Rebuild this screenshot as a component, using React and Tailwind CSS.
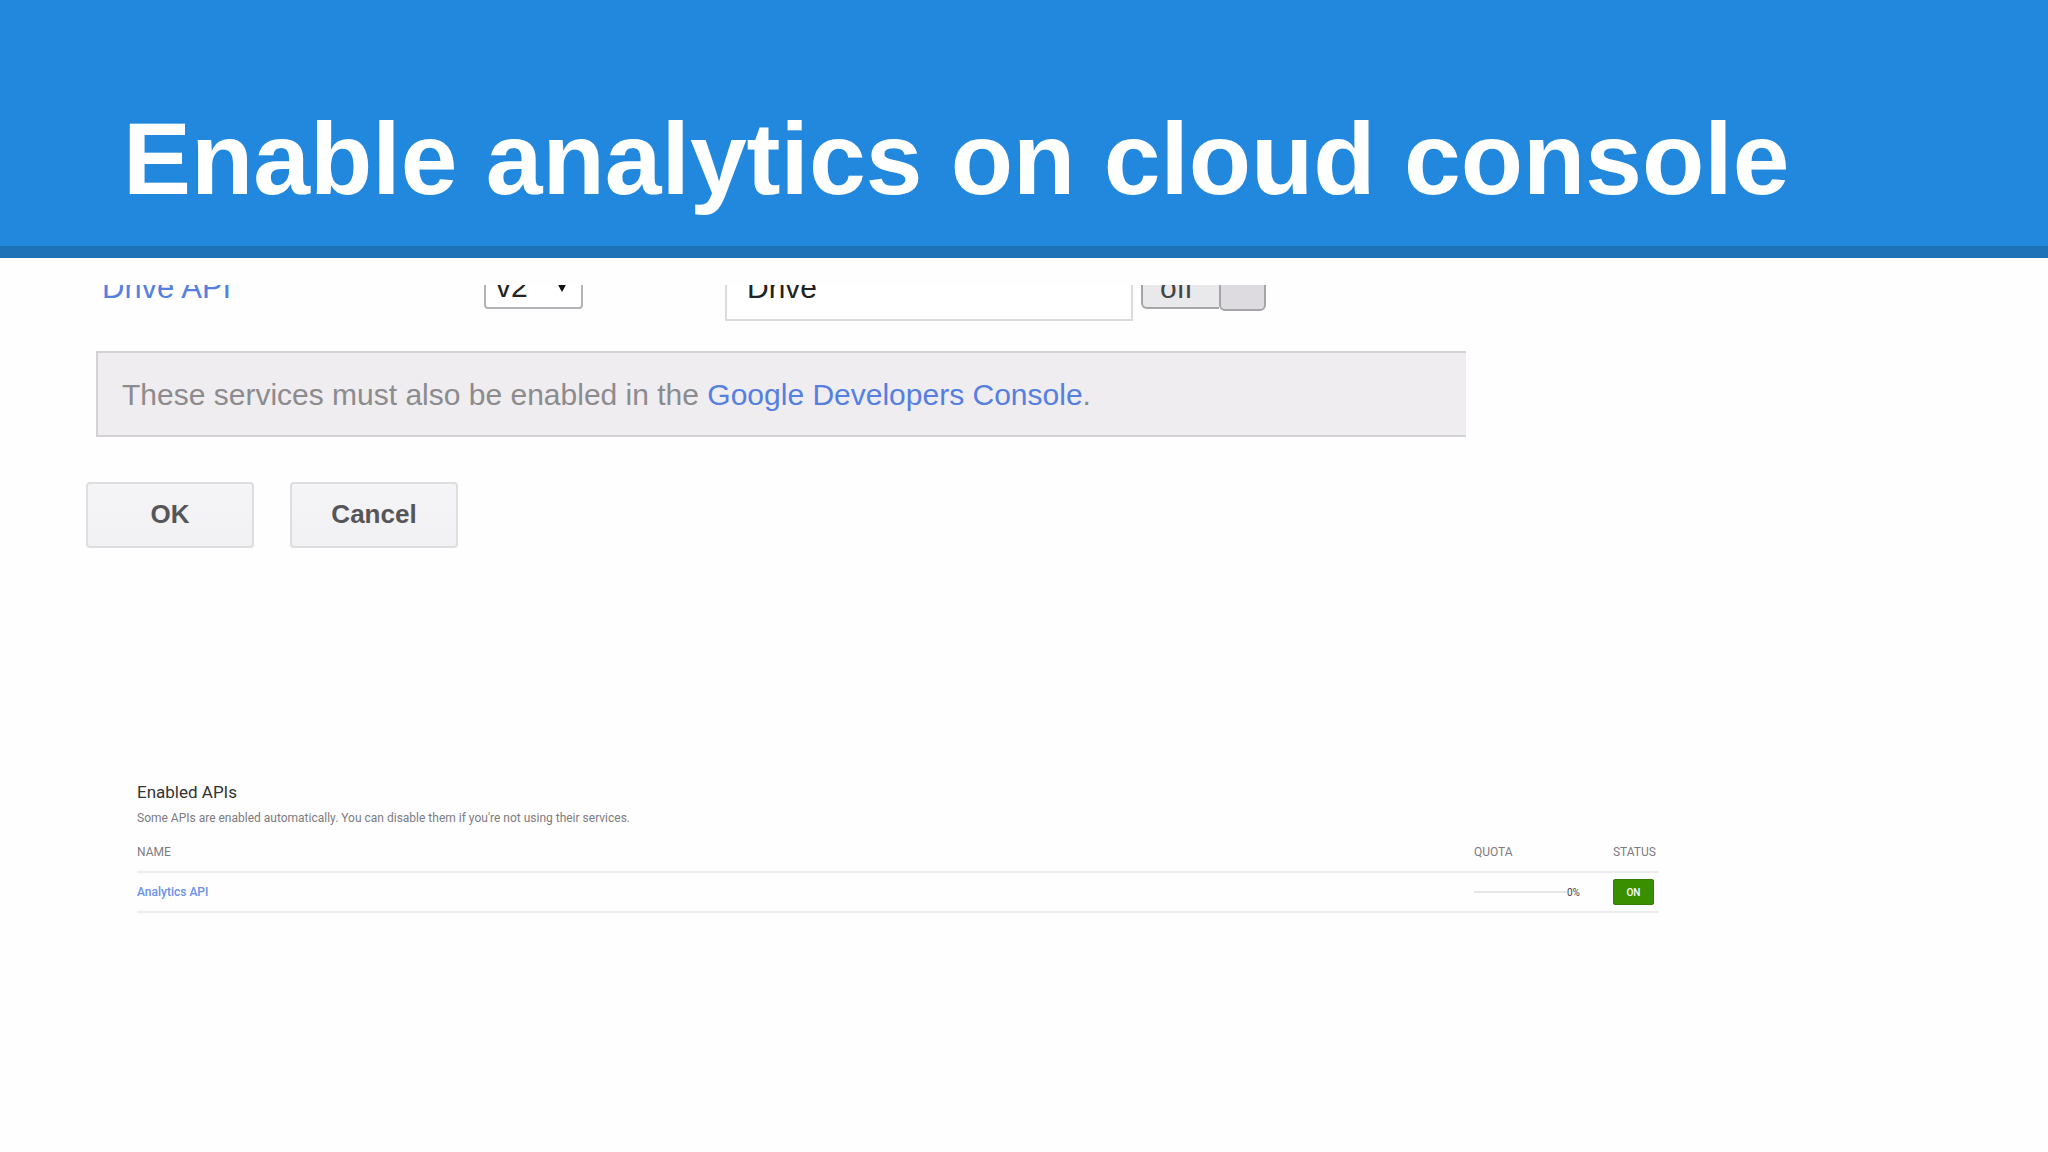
import React, { useState } from 'react';

const apis = [{ name: 'Analytics API', quota: 0 }];

const DriveRow = () => {
  const [version, setVersion] = useState('v2');
  const [identifier, setIdentifier] = useState('Drive');
  const [enabled, setEnabled] = useState(false);

  return (
    <div className="flex h-9 items-end overflow-hidden pl-[102px] text-[30px]">
      <div className="flex h-[66px] shrink-0 items-center">
        <a href="#drive" className="w-[382px] text-[31px] text-[#5580e0]">Drive API</a>
        <div className="relative mr-[142px]">
          <select
            aria-label="Version"
            value={version}
            onChange={(e) => setVersion(e.target.value)}
            className="block h-[42px] w-[99px] appearance-none rounded border-2 border-[#b4b3b8] bg-white pb-[2px] pl-[10px] leading-9 text-[#222]"
          >
            <option>v2</option>
            <option>v1</option>
          </select>
          <svg className="pointer-events-none absolute right-4 top-4 h-[9px] w-[10px]" viewBox="0 0 10 9">
            <path d="M0 0h10L5 9z" fill="#111" />
          </svg>
        </div>
        <input
          type="text"
          aria-label="Identifier"
          value={identifier}
          onChange={(e) => setIdentifier(e.target.value)}
          className="mr-2 h-[66px] w-[408px] border-2 border-[#dcdade] bg-white pl-5 text-[#222]"
        />
        <button
          type="button"
          role="switch"
          aria-checked={enabled}
          aria-label="Drive API"
          onClick={() => setEnabled(!enabled)}
          className="flex items-center text-[#444]"
        >
          <span className="flex h-[42px] w-[78px] items-center rounded-l-md border-2 border-r-0 border-[#a5a4a8] bg-[#e9e9eb] pb-[2px] pl-[17px]">
            {enabled ? 'on' : 'off'}
          </span>
          <span className="h-[46px] w-[47px] rounded-md border-2 border-[#a5a4a8] bg-[#dddbe0]" />
        </button>
      </div>
    </div>
  );
};

const DialogButton = ({ children }) => (
  <button
    type="button"
    className="h-[66px] w-[168px] rounded border-2 border-[#dedde0] bg-gradient-to-b from-[#f5f4f6] to-[#f1f0f2] pb-[2px] text-[26px] font-bold text-[#55555a]"
  >
    {children}
  </button>
);

const EnabledApis = () => (
  <section className="ml-[137px] mr-[19%] font-[Roboto,sans-serif] text-[12px] text-[#7d7b80]">
    <h2 className="text-[17px] leading-6 text-[#333]">Enabled APIs</h2>
    <p className="mt-1 leading-5">
      Some APIs are enabled automatically. You can disable them if you're not using their services.
    </p>
    <table className="mt-1 w-full table-fixed text-left">
      <thead>
        <tr className="h-10 border-b-2 border-[#ecebf0]">
          <th className="font-normal">NAME</th>
          <th className="w-[139px] font-normal">QUOTA</th>
          <th className="w-[46px] font-normal">STATUS</th>
        </tr>
      </thead>
      <tbody>
        {apis.map((api) => (
          <tr key={api.name} className="h-10 border-b-2 border-[#ecebf0]">
            <td>
              <a href="#analytics" className="font-medium text-[#6b90ea]">{api.name}</a>
            </td>
            <td>
              <div className="flex items-center text-[10px] text-[#444]">
                <div className="h-[2px] w-[93px] bg-[#e6e6e8]">
                  <div className="h-full bg-[#3c8f00]" style={{ width: `${api.quota}%` }} />
                </div>
                {api.quota}%
              </div>
            </td>
            <td>
              <button type="button" className="block h-[26px] w-[41px] rounded-[2px] border border-[#338000] bg-[#398f00] text-[10px] font-medium text-white">
                ON
              </button>
            </td>
          </tr>
        ))}
      </tbody>
    </table>
  </section>
);

const App = () => {
  return (
    <div className="min-h-screen bg-[#fefefe] font-['Liberation_Sans',Arial,sans-serif]">
      <header className="border-b-[12px] border-[#1d72b8] bg-[#2288dd] pb-[25px] pl-[123px] pt-[97px]">
        <h1 className="text-[102px] font-bold leading-[124px] text-white">Enable analytics on cloud console</h1>
      </header>

      <main className="pt-[27px]">
        <DriveRow />

        {/* Console notice */}
        <p className="ml-24 mr-[582px] mt-[30px] border-2 border-r-0 border-[#d3d1d5] bg-[#efedf0] pb-[22px] pl-6 pt-6 text-[30px] leading-[36px] text-[#8c8b8e]">
          These services must also be enabled in the{' '}
          <a href="#console" className="text-[#5580e0]">Google Developers Console</a>.
        </p>

        <div className="ml-[86px] mt-[45px] flex gap-9">
          <DialogButton>OK</DialogButton>
          <DialogButton>Cancel</DialogButton>
        </div>

        <div className="mt-[232px]">
          <EnabledApis />
        </div>
      </main>
    </div>
  );
};

export default App;
